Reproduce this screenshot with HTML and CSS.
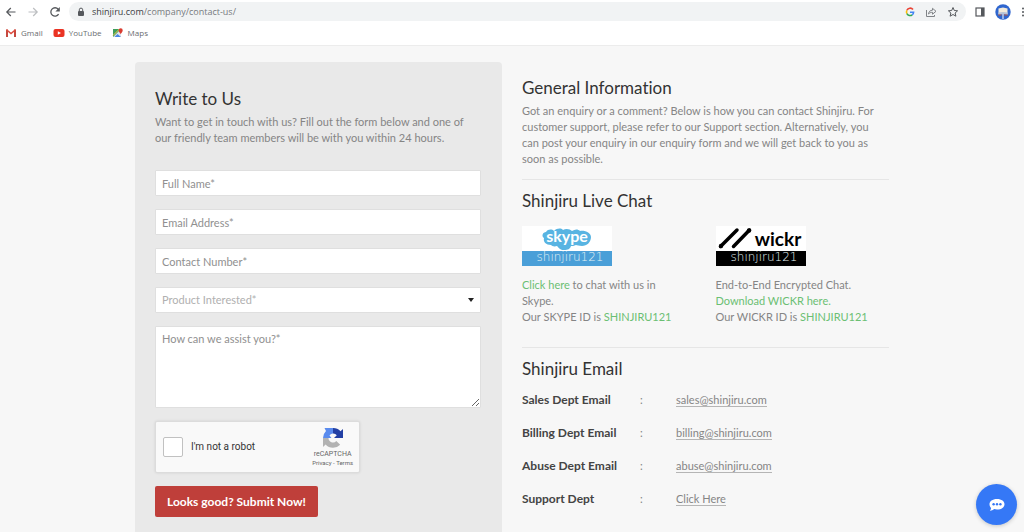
FILE: index.html
```html
<!DOCTYPE html>
<html lang="en">
<head>
    <meta charset="UTF-8">
    <meta name="viewport" content="width=device-width, initial-scale=1.0">
    <title>Contact Us - Shinjiru</title>
    <link rel="stylesheet" href="styles.css">
</head>
<body>
    <header class="browser">
        <div class="toolbar">
            <button class="tool" type="button" aria-label="Back">
                <svg width="12" height="12" viewBox="0 0 12 12" fill="none" stroke="#55585c" stroke-width="1.2"><path d="M10.500 6H2M5.800 2 1.800 6 5.800 10"/></svg>
            </button>
            <button class="tool" type="button" aria-label="Forward">
                <svg width="12" height="12" viewBox="0 0 12 12" fill="none" stroke="#bcbec1" stroke-width="1.2"><path d="M1.500 6H10M6.200 2l4 4-4 4"/></svg>
            </button>
            <button class="tool" type="button" aria-label="Reload">
                <svg width="12" height="12" viewBox="0 0 12 12"><path d="M9.6 8.2A4.2 4.2 0 1 1 9.2 3.2" fill="none" stroke="#55585c" stroke-width="1.3"/><path d="M10.8 1v4.4H6.4z" fill="#55585c"/></svg>
            </button>
            <div class="address">
                <svg width="8" height="10" viewBox="0 0 8 10"><rect x="1" y="4" width="6" height="5" rx="1" fill="#55585c"/><path d="M2.3 4.4V2.8a1.7 1.7 0 0 1 3.4 0v1.6" fill="none" stroke="#55585c"/></svg>
                <span class="url"><span class="domain">shinjiru.com</span>/company/contact-us/</span>
                <button class="tool" type="button" aria-label="Google">
                    <svg width="10" height="10" viewBox="0 0 10 10" fill="none" stroke-width="1.6"><path d="M8 2.5A3.6 3.6 0 0 0 1.9 3.3" stroke="#ea4335"/><path d="M1.9 3.3a3.6 3.6 0 0 0 0 3.4" stroke="#fbbc05"/><path d="M1.9 6.7a3.6 3.6 0 0 0 5.3 1.1" stroke="#34a853"/><path d="M7.2 7.8A3.6 3.6 0 0 0 8.6 5.2H5" stroke="#4285f4"/></svg>
                </button>
                <button class="tool" type="button" aria-label="Share">
                    <svg width="12" height="12" viewBox="0 0 12 12" fill="none" stroke="#808387"><path d="M1.5 4v6.5h8V9"/><path d="M3.5 8c.3-2.500 1.700-3.700 4-3.800V2.300L11 5.300 7.500 8.200V6.300C5.700 6.300 4.400 6.900 3.500 8z"/></svg>
                </button>
                <button class="tool" type="button" aria-label="Bookmark this page">
                    <svg width="12" height="12" viewBox="0 0 12 12" fill="none" stroke="#55585c"><path d="m6 1.500 1.300 3 3.300.3-2.500 2.200.8 3.200L6 8.500l-2.900 1.700.8-3.200-2.500-2.200 3.300-.3z"/></svg>
                </button>
            </div>
            <button class="tool" type="button" aria-label="Side panel">
                <svg width="10" height="10" viewBox="0 0 10 10"><rect x="1" y="1" width="8" height="8" fill="none" stroke="#55585c" stroke-width="1.2"/><path d="M6 1h3v8H6z" fill="#55585c"/></svg>
            </button>
            <button class="tool" type="button" aria-label="Profile">
                <svg width="16" height="16" viewBox="0 0 16 16"><circle cx="8" cy="8" r="7.700" fill="#2f66cf"/><path d="M3.500 4.500 8 3.500l4.500 1v6L8 10l-4.500.5z" fill="#f3ead9"/><path d="M3.500 8.500 8 8l4.500.5v2L8 10l-4.500.5z" fill="#b8c3d6"/><path d="M3.300 11h3.200M9 11h3.500" stroke="#b5533c"/><path d="M8 10v5" stroke="#dfe7f2" stroke-width="1.200"/></svg>
            </button>
            <button class="tool menu" type="button" aria-label="Menu">
                <svg width="4" height="12" viewBox="0 0 4 12" fill="#55585c"><circle cx="2" cy="2.500" r="1"/><circle cx="2" cy="6" r="1"/><circle cx="2" cy="9.500" r="1"/></svg>
            </button>
        </div>
        <nav class="bookmarks">
            <a href="#">
                <svg width="12" height="10" viewBox="0 0 12 10"><path d="M1 1.500h2V9H1z" fill="#c5483f"/><path d="M9 1.500h2V9H9z" fill="#c5483f"/><path d="M1.500 1.800 6 5.600l4.500-3.800" fill="none" stroke="#dd4b3e" stroke-width="1.500"/></svg>
                Gmail
            </a>
            <a href="#">
                <svg width="12" height="10" viewBox="0 0 12 10"><rect x=".5" y="1" width="11" height="8" rx="2" fill="#ea3323"/><path d="M4.800 3.200 8 5 4.800 6.800z" fill="#fff"/></svg>
                YouTube
            </a>
            <a href="#">
                <svg width="12" height="10" viewBox="0 0 12 10"><path d="M1 1h8v8H1z" fill="#3f9d5a"/><path d="M1 9 9 1v8z" fill="#dfe3e8"/><path d="m2.500 9 3-3 3.500 3z" fill="#4a86e8"/><path d="M1 7.500 7.500 1" stroke="#f3c74b"/><path d="M8.700 6C7.500 4.500 6.700 3.600 6.700 2.300a2 2 0 0 1 4 0c0 1.300-.8 2.200-2 3.700z" fill="#d93c30"/></svg>
                Maps
            </a>
        </nav>
    </header>

    <main class="container">
        <section class="write-card">
            <h2>Write to Us</h2>
            <p>Want to get in touch with us? Fill out the form below and one of our friendly team members will be with you within 24 hours.</p>
            <form class="contact-form">
                <input class="field" type="text" placeholder="Full Name*" aria-label="Full Name">
                <input class="field" type="email" placeholder="Email Address*" aria-label="Email Address">
                <input class="field" type="tel" placeholder="Contact Number*" aria-label="Contact Number">
                <div class="select-wrap">
                    <select class="field" aria-label="Product Interested">
                        <option>Product Interested*</option>
                    </select>
                </div>
                <textarea class="field message" placeholder="How can we assist you?*" aria-label="How can we assist you?"></textarea>
                <div class="captcha">
                    <label class="captcha-label">
                        <input class="captcha-box" type="checkbox">
                        I'm not a robot
                    </label>
                    <div class="captcha-brand">
                        <svg width="22" height="22" viewBox="0 0 22 22">
                            <path d="M1 11A10 10 0 0 1 4 4L2.500 1H11v5.500A4.500 4.500 0 0 0 7.500 8.500L9.500 11z" fill="#5a8bee"/>
                            <path d="M11 1a10 10 0 0 1 7.500 3.200L21 2v9h-9l2.800-2.800A4.500 4.500 0 0 0 11 6.500z" fill="#2340a5"/>
                            <path d="M1 11h5.500a4.500 4.500 0 0 0 7.800 3l3.900 3.700A10 10 0 0 1 3.600 17.500L1 20z" fill="#b3b3b3"/>
                        </svg>
                        <span class="captcha-name">reCAPTCHA</span>
                        <span class="captcha-links"><a href="#">Privacy</a> - <a href="#">Terms</a></span>
                    </div>
                </div>
                <button class="submit" type="submit">Looks good? Submit Now!</button>
            </form>
        </section>

        <div class="info">
            <section class="info-block">
                <h2>General Information</h2>
                <p class="intro">Got an enquiry or a comment? Below is how you can contact Shinjiru. For customer support, please refer to our Support section. Alternatively, you can post your enquiry in our enquiry form and we will get back to you as soon as possible.</p>
            </section>

            <section class="info-block chat-block">
                <h2>Shinjiru Live Chat</h2>
                <div class="chats">
                    <div class="chat">
                        <svg class="chat-logo" width="90" height="40" viewBox="0 0 90 40" role="img" aria-label="Skype shinjiru121">
                            <path d="M0 0h90v40H0z" fill="#fff"/>
                            <path d="M24 6c2-3 6-3 8-1 3-3 7-3 9-1 3-2 7-1 9 1 3-2 6-2 8 0 5-1 11 2 11 6 0 5-4 9-9 9-3 0-5-1-6-1-2 1-4 1-5 1-1 3-3 4-7 4-4 0-5-2-7-4-3 1-5 0-6-1-5 0-8-3-7-7-3-2-1-6 2-6z" fill="#58b4e2"/>
                            <text class="logo-skype" x="45" y="16" text-anchor="middle">skype</text>
                            <path d="M0 25h90v15H0z" fill="#4a9fd8"/>
                            <text class="logo-id" x="48" y="35" text-anchor="middle">shinjiru121</text>
                        </svg>
                        <p><a href="#">Click here</a> to chat with us in Skype.<br>Our SKYPE ID is <a href="#">SHINJIRU121</a></p>
                    </div>
                    <div class="chat">
                        <svg class="chat-logo" width="90" height="40" viewBox="0 0 90 40" role="img" aria-label="Wickr shinjiru121">
                            <path d="M0 0h90v40H0z" fill="#fff"/>
                            <path d="M4.500 20.500 21 4M17.500 20.500 33.500 4" stroke="#000" stroke-width="3.500" stroke-linecap="round"/>
                            <circle cx="5" cy="20" r="2.200"/><circle cx="33" cy="4.500" r="2.200"/>
                            <text class="logo-wickr" x="62" y="20" text-anchor="middle">wickr</text>
                            <path d="M0 25h90v15H0z"/>
                            <text class="logo-id" x="48" y="35" text-anchor="middle">shinjiru121</text>
                        </svg>
                        <p>End-to-End Encrypted Chat.<br><a href="#">Download WICKR here.</a><br>Our WICKR ID is <a href="#">SHINJIRU121</a></p>
                    </div>
                </div>
            </section>

            <section class="info-block">
                <h2>Shinjiru Email</h2>
                <table class="emails">
                    <tr><th scope="row">Sales Dept Email</th><td class="colon">:</td><td><a href="#">sales@shinjiru.com</a></td></tr>
                    <tr><th scope="row">Billing Dept Email</th><td class="colon">:</td><td><a href="#">billing@shinjiru.com</a></td></tr>
                    <tr><th scope="row">Abuse Dept Email</th><td class="colon">:</td><td><a href="#">abuse@shinjiru.com</a></td></tr>
                    <tr><th scope="row">Support Dept</th><td class="colon">:</td><td><a href="#">Click Here</a></td></tr>
                </table>
            </section>
        </div>
    </main>

    <button class="chat-bubble" type="button" aria-label="Open chat">
        <svg width="18" height="14" viewBox="0 0 18 14"><path d="M9 1c4.600 0 7.500 2.300 7.500 5.200S13.600 11.500 9 11.500c-1 0-2-.1-2.900-.4-1.100 1-2.600 1.600-4.300 1.700.8-.8 1.200-1.700 1.300-2.800C2.100 9 1.500 7.700 1.500 6.200 1.500 3.300 4.400 1 9 1z" fill="#fff"/><g fill="#3578f6"><circle cx="5.600" cy="6.200" r="1.200"/><circle cx="9" cy="6.200" r="1.200"/><circle cx="12.400" cy="6.200" r="1.200"/></g></svg>
    </button>
</body>
</html>
```

FILE: styles.css
```css
* {
    box-sizing: border-box;
}
body {
    display: flex;
    flex-direction: column;
    min-height: 100vh;
    margin: 0;
    background-color: #f7f7f7;
    color: #858585;
    font-family: Lato, "Open Sans", sans-serif;
    font-size: 11px;
    font-variant-ligatures: none;
    line-height: 16px;
}
h2 {
    margin: 0 0 5px;
    color: #333;
    font-size: 17px;
    font-weight: 400;
    line-height: 20px;
}
p {
    margin: 0;
}
button {
    border: 0;
    cursor: pointer;
}

/* browser bar */
.browser {
    height: 46px;
    background-color: #fff;
    border-bottom: 1px solid #ececec;
    font-family: "Open Sans", "Noto Sans", sans-serif;
}
.toolbar {
    display: flex;
    align-items: center;
    gap: 10px;
    height: 23px;
    padding-left: 5px;
    overflow: hidden;
}
.tool {
    display: flex;
    flex: none;
    padding: 0;
    background: none;
}
.address {
    display: flex;
    flex: 1;
    align-items: center;
    gap: 10px;
    height: 19px;
    margin: 0 -1px 0 -2px;
    padding: 0 7px 0 8px;
    background-color: #f1f3f4;
    border-radius: 10px;
}
.url {
    flex: 1;
    margin-left: -3px;
    color: #777a7e;
    font-size: 9px;
}
.domain {
    color: #3c4043;
}
.menu {
    margin-right: -1px;
}
.bookmarks {
    display: flex;
    gap: 10px;
    padding: 2px 5px;
}
.bookmarks a {
    display: flex;
    align-items: center;
    gap: 4px;
    color: #6a6d70;
    font-size: 8px;
    text-decoration: none;
}

/* page */
.container {
    display: grid;
    flex: 1;
    grid-template-columns: 1fr 1fr;
    gap: 20px;
    width: 100%;
    max-width: 754px;
    margin: 0 auto;
    padding-top: 16px;
}
.write-card {
    padding: 27px 21px 15px 20px;
    background-color: #e9e9e9;
    border-radius: 4px 4px 0 0;
}
.contact-form {
    display: flex;
    flex-direction: column;
    align-items: flex-start;
    gap: 13px;
    margin-top: 24px;
}
.field {
    display: block;
    width: 100%;
    height: 26px;
    padding: 0 6px;
    background-color: #fff;
    border: 1px solid #dfdfdf;
    border-radius: 1px;
    color: #858585;
    font: inherit;
}
.field::placeholder {
    color: #909090;
}
.select-wrap {
    position: relative;
    width: 100%;
}
.select-wrap::after {
    content: "";
    position: absolute;
    top: 11px;
    right: 7px;
    border: 3px solid transparent;
    border-top: 4px solid #222;
    border-bottom: 0;
    pointer-events: none;
}
select.field {
    appearance: none;
    color: #b0b0b0;
}
.message {
    height: 82px;
    padding: 4px 6px;
    resize: vertical;
}
.captcha {
    display: flex;
    align-items: center;
    justify-content: space-between;
    width: 205px;
    height: 52px;
    padding: 0 6px 0 7px;
    background-color: #f9f9f9;
    border: 1px solid #dcdcdc;
    border-radius: 2px;
    box-shadow: 0 0 3px rgba(0, 0, 0, 0.1);
    font-family: Roboto, sans-serif;
}
.captcha-label {
    display: flex;
    align-items: center;
    gap: 8px;
    color: #333;
    font-size: 10px;
}
.captcha-box {
    appearance: none;
    width: 20px;
    height: 20px;
    margin: 0;
    background-color: #fff;
    border: 1px solid #c1c1c1;
    border-radius: 2px;
}
.captcha-brand {
    display: flex;
    flex-direction: column;
    align-items: center;
    color: #666;
}
.captcha-name {
    font-size: 7px;
    line-height: 10px;
}
.captcha-links {
    font-size: 6px;
    line-height: 8px;
}
.captcha-links a {
    color: inherit;
    text-decoration: none;
}
.submit {
    height: 31px;
    padding: 0 12px;
    background-color: #bf3f3a;
    border-radius: 2px;
    color: #fff;
    font: inherit;
    font-size: 12px;
    font-weight: 700;
}

.info {
    padding-top: 16px;
}
.intro {
    padding-right: 4px;
}
.info-block + .info-block {
    margin-top: 12px;
    padding-top: 11px;
    border-top: 1px solid #e6e6e6;
}
.info .chat-block + .info-block {
    margin-top: 22px;
}
.chats {
    display: grid;
    grid-template-columns: 1fr 1fr;
    gap: 20px;
    margin-top: 15px;
}
.chat {
    padding-right: 16px;
}
.chat-logo {
    display: block;
    margin-bottom: 11px;
}
.chat a {
    color: #6bbf73;
    text-decoration: none;
}
.logo-skype {
    fill: #fff;
    font: 700 16px Lato, sans-serif;
}
.logo-wickr {
    fill: #000;
    font: 700 19px Lato, sans-serif;
}
.logo-id {
    fill: #e4f2f4;
    font: 200 12px "DejaVu Sans", sans-serif;
}
.emails {
    width: 100%;
    margin-top: -1px;
    border-collapse: collapse;
}
.emails th,
.emails td {
    height: 33px;
    padding: 0;
    text-align: left;
}
.emails th {
    width: 118px;
    color: #444;
    font-size: 12px;
    font-weight: 700;
}
.emails .colon {
    width: 36px;
}
.emails a {
    border-bottom: 1px solid #b5b5b5;
    color: #858585;
    text-decoration: none;
}

.chat-bubble {
    position: fixed;
    right: 7px;
    bottom: 7px;
    display: flex;
    align-items: center;
    justify-content: center;
    width: 41px;
    height: 41px;
    background-color: #3578f6;
    border-radius: 50%;
    box-shadow: 0 1px 4px rgba(0, 0, 0, 0.2);
}
```
